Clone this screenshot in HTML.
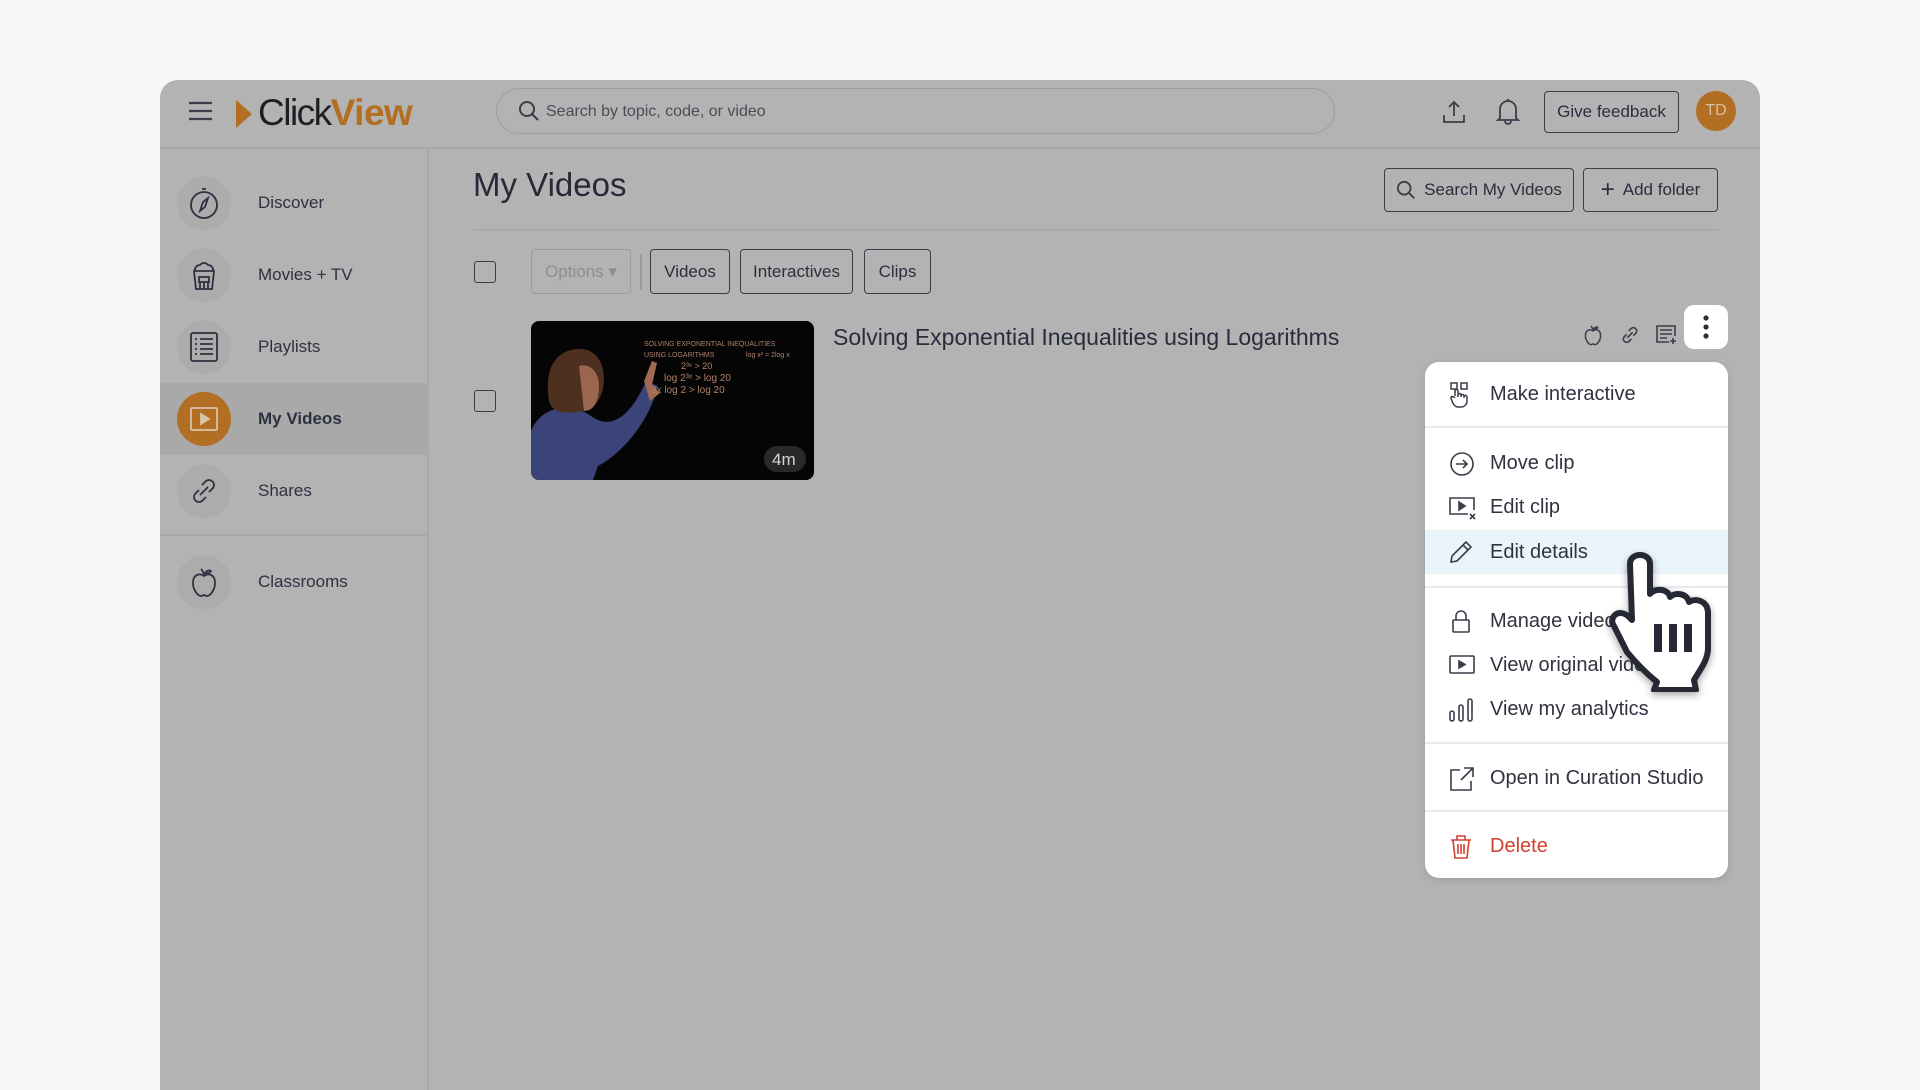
<!DOCTYPE html>
<html><head><meta charset="utf-8"><style>
*{box-sizing:border-box;margin:0;padding:0}
body{width:1920px;height:1080px;background:#f7f7f7;font-family:"Liberation Sans",sans-serif;position:relative;overflow:hidden;color:#2b2e3c}
.win{position:absolute;left:160px;top:80px;width:1600px;height:1010px;background:#b3b3b3;border-radius:18px 18px 0 0;overflow:hidden}
.abs{position:absolute}
.hdr{left:0;top:0;width:1600px;height:69px;border-bottom:2px solid #a9a9a9}
.side{left:0;top:69px;width:269px;height:950px;border-right:2px solid #a9a9a9}
.nav{position:absolute;left:0;width:269px;height:72px}
.nav .ic{position:absolute;left:17px;top:9px;width:54px;height:54px;border-radius:50%;background:#acacac;display:flex;align-items:center;justify-content:center}
.nav .tx{position:absolute;left:98px;top:26px;font-size:17px;color:#2e3140}
.btn{position:absolute;border:1.5px solid #3a3d4a;border-radius:4px;font-size:17px;display:flex;align-items:center;justify-content:center;color:#2b2e3c}
.menu{position:absolute;left:1425px;top:362px;width:303px;height:516px;background:#fff;border-radius:14px;box-shadow:0 2px 8px rgba(0,0,0,.12)}
.mi{position:absolute;left:0;width:303px;height:44px}
.mi .t{position:absolute;left:65px;top:11px;font-size:20px;color:#30333f}
.mi svg{position:absolute;left:24px;top:10px}
.sep{position:absolute;left:0;width:303px;height:2px;background:#e9e9ec}
</style></head><body>
<div class="win">
 <div class="abs hdr">
  <svg class="abs" style="left:28px;top:21px" width="25" height="20" viewBox="0 0 25 20"><path d="M1 2h23M1 10h23M1 18h23" stroke="#3a3d4a" stroke-width="2.2"/></svg>
  <svg class="abs" style="left:75px;top:19px" width="18" height="30"><path d="M1 1L17 15L1 29Z" fill="#b26e22"/></svg>
  <div class="abs" style="left:98px;top:12px;font-size:37px;letter-spacing:-1.5px;color:#1e1e24">Click<span style="color:#b26e22;font-weight:bold;letter-spacing:-0.5px">View</span></div>
  <div class="abs" style="left:336px;top:8px;width:839px;height:46px;border:1.5px solid #9e9e9e;border-radius:23px"></div>
  <svg class="abs" style="left:358px;top:20px" width="22" height="22" viewBox="0 0 22 22"><circle cx="9" cy="9" r="7" fill="none" stroke="#3a3d4a" stroke-width="2"/><path d="M14 14l6 6" stroke="#3a3d4a" stroke-width="2"/></svg>
  <div class="abs" style="left:386px;top:23px;font-size:16px;color:#4a4c57">Search by topic, code, or video</div>
  <svg class="abs" style="left:1281px;top:19px" width="26" height="26" viewBox="0 0 26 26" fill="none" stroke="#3a3d4a" stroke-width="1.8"><path d="M13 17V3M8 8l5-5 5 5M3 16v7h20v-7"/></svg>
  <svg class="abs" style="left:1335px;top:17px" width="26" height="28" viewBox="0 0 26 28" fill="none" stroke="#3a3d4a" stroke-width="1.8"><path d="M5 21V12a8 8 0 0116 0v9l2 2H3zM10 24a3 3 0 006 0M13 2v2"/></svg>
  <div class="btn" style="left:1384px;top:11px;width:135px;height:42px">Give feedback</div>
  <div class="abs" style="left:1536px;top:11px;width:40px;height:40px;border-radius:50%;background:#b26e22;color:#d8c0a6;font-size:16px;display:flex;align-items:center;justify-content:center">TD</div>
 </div>
 <div class="abs side">
  <div class="nav" style="top:18px"><div class="ic"><svg width="32" height="34" viewBox="0 0 32 34" fill="none" stroke="#2e3140" stroke-width="1.8"><circle cx="16" cy="19" r="13"/><path d="M14 3h4M20 12l-3 9-5 4 3-9z"/></svg></div><div class="tx">Discover</div></div>
  <div class="nav" style="top:90px"><div class="ic"><svg width="28" height="32" viewBox="0 0 28 32" fill="none" stroke="#2e3140" stroke-width="1.8"><path d="M4 12h20l-2 18H6zM5 12a5 5 0 015-6 5 5 0 018 0 5 5 0 015 6M9 18h10v5H9zM10 23v7M18 23v7M14 23v7"/></svg></div><div class="tx">Movies + TV</div></div>
  <div class="nav" style="top:162px"><div class="ic"><svg width="28" height="30" viewBox="0 0 28 30" fill="none" stroke="#2e3140" stroke-width="1.8"><rect x="1" y="1" width="26" height="28" rx="2"/><path d="M5 7h2M10 7h13M5 12h2M10 12h13M5 17h2M10 17h13M5 22h2M10 22h13"/></svg></div><div class="tx">Playlists</div></div>
  <div class="abs" style="left:0;top:234px;width:269px;height:72px;background:#a9a9a9"></div>
  <div class="nav" style="top:234px"><div class="ic" style="background:#b26e22"><svg width="28" height="24" viewBox="0 0 28 24" fill="none" stroke="#d9c3a8" stroke-width="1.8"><rect x="1" y="1" width="26" height="22" rx="1"/><path d="M11 7v10l8-5z" fill="#d9c3a8"/></svg></div><div class="tx" style="font-weight:bold">My Videos</div></div>
  <div class="nav" style="top:306px"><div class="ic"><svg width="30" height="30" viewBox="0 0 30 30" fill="none" stroke="#2e3140" stroke-width="1.8"><path d="M13 9l4-4a5 5 0 017 7l-4 4M17 21l-4 4a5 5 0 01-7-7l4-4M11 19l8-8"/></svg></div><div class="tx">Shares</div></div>
  <div class="abs" style="left:0;top:385px;width:269px;height:2px;background:#a9a9a9"></div>
  <div class="nav" style="top:397px"><div class="ic"><svg width="28" height="32" viewBox="0 0 28 32" fill="none" stroke="#2e3140" stroke-width="1.8"><path d="M14 10c-4-3-11-2-11 7 0 7 5 13 8 13 2 0 2-1 3-1s1 1 3 1c3 0 8-6 8-13 0-9-7-10-11-7zM14 10c0-3-1-5-3-7M15 7c2-3 5-3 6-2-1 2-4 3-6 2z"/></svg></div><div class="tx">Classrooms</div></div>
 </div>
 <div class="abs" style="left:313px;top:86px;font-size:33px;color:#262938">My Videos</div>
 <div class="btn" style="left:1224px;top:88px;width:190px;height:44px"><svg width="20" height="20" viewBox="0 0 22 22" style="margin-right:8px"><circle cx="9" cy="9" r="7" fill="none" stroke="#3a3d4a" stroke-width="2"/><path d="M14 14l6 6" stroke="#3a3d4a" stroke-width="2"/></svg>Search My Videos</div>
 <div class="btn" style="left:1423px;top:88px;width:135px;height:44px"><span style="font-size:24px;margin-right:8px;line-height:1">+</span>Add folder</div>
 <div class="abs" style="left:313px;top:149px;width:1245px;height:2px;background:#a9a9a9"></div>
 <div class="abs" style="left:314px;top:181px;width:22px;height:22px;border:1.5px solid #3a3d4a;border-radius:3px"></div>
 <div class="btn" style="left:371px;top:169px;width:100px;height:45px;border-color:#9c9c9c;color:#8d8d8d">Options ▾</div>
 <div class="abs" style="left:480px;top:174px;width:2px;height:36px;background:#9c9c9c"></div>
 <div class="btn" style="left:490px;top:169px;width:80px;height:45px">Videos</div>
 <div class="btn" style="left:580px;top:169px;width:113px;height:45px">Interactives</div>
 <div class="btn" style="left:704px;top:169px;width:67px;height:45px">Clips</div>
 <div class="abs" style="left:314px;top:310px;width:22px;height:22px;border:1.5px solid #3a3d4a;border-radius:3px"></div>
 <svg class="abs" style="left:371px;top:241px;border-radius:8px" width="283" height="159" viewBox="0 0 283 159">
  <rect width="283" height="159" fill="#050505"/>
  <path d="M0 159V110c10-25 40-30 60-15 20 15 40 0 55-35l12 5c-10 40-40 70-60 80l-5 14z" fill="#3a4478"/>
  <path d="M18 80c-5-30 5-50 28-52 22-2 30 20 26 40-3 12-10 20-20 22-12 2-30 5-34-10z" fill="#4e3020"/>
  <path d="M48 45c10-3 20 5 20 20s-5 25-15 25z" fill="#9a6650"/>
  <path d="M113 60l8-20 5 2-5 22 8 8-10 8z" fill="#a06a50"/>
  <g fill="#b0826a" font-size="7" font-family="Liberation Sans">
   <text x="113" y="25">SOLVING EXPONENTIAL INEQUALITIES</text>
   <text x="113" y="36">USING LOGARITHMS</text>
   <text x="215" y="36">log x² = 2log x</text>
   <text x="150" y="48" font-size="9">2³ˣ &gt; 20</text>
   <text x="133" y="60" font-size="10">log 2³ˣ &gt; log 20</text>
   <text x="120" y="72" font-size="10">3x log 2 &gt; log 20</text>
  </g>
  <rect x="233" y="125" width="42" height="26" rx="13" fill="#2a2828"/>
  <text x="241" y="144" font-size="17" fill="#d4d4d4" font-family="Liberation Sans">4m</text>
 </svg>
 <div class="abs" style="left:673px;top:244px;font-size:23px;color:#292c3b">Solving Exponential Inequalities using Logarithms</div>
 <svg class="abs" style="left:1423px;top:244px" width="20" height="22" viewBox="0 0 28 32" fill="none" stroke="#3a3d4a" stroke-width="2.2"><path d="M14 10c-4-3-11-2-11 7 0 7 5 13 8 13 2 0 2-1 3-1s1 1 3 1c3 0 8-6 8-13 0-9-7-10-11-7zM14 10c0-3-1-5-3-7M15 7c2-3 5-3 6-2-1 2-4 3-6 2z"/></svg>
 <svg class="abs" style="left:1460px;top:245px" width="20" height="20" viewBox="0 0 30 30" fill="none" stroke="#3a3d4a" stroke-width="2.4"><path d="M13 9l4-4a5 5 0 017 7l-4 4M17 21l-4 4a5 5 0 01-7-7l4-4M11 19l8-8"/></svg>
 <svg class="abs" style="left:1496px;top:245px" width="22" height="20" viewBox="0 0 22 20" fill="none" stroke="#3a3d4a" stroke-width="1.6"><path d="M13 17H1V1h18v10M4 5h12M4 9h12M4 13h7M17 13v6M14 16h6"/></svg>
</div>
<div class="abs" style="left:1684px;top:305px;width:44px;height:44px;background:#fff;border-radius:10px"><svg width="44" height="44"><circle cx="22" cy="13" r="2.6" fill="#2b2e3c"/><circle cx="22" cy="22" r="2.6" fill="#2b2e3c"/><circle cx="22" cy="31" r="2.6" fill="#2b2e3c"/></svg></div>
<div class="menu">
 <div class="mi" style="top:10px"><svg width="24" height="26" viewBox="0 0 24 26" fill="none" stroke="#3a3d4a" stroke-width="1.5"><rect x="2" y="1" width="6" height="6"/><rect x="12" y="1" width="6" height="6"/><path d="M6 14V9a1.5 1.5 0 013 0v6M9 13a1.5 1.5 0 013 0v2M12 14a1.5 1.5 0 013 0v2M15 15a1.5 1.5 0 013 0v4c0 4-3 6-6 6H9c-3 0-5-3-6-6l-1-3c0-2 2-2 4 0"/></svg><div class="t">Make interactive</div></div>
 <div class="sep" style="top:64px"></div>
 <div class="mi" style="top:79px"><svg width="26" height="26" viewBox="0 0 26 26" fill="none" stroke="#3a3d4a" stroke-width="1.6"><circle cx="13" cy="13" r="11"/><path d="M7 13h11M14 9l4 4-4 4"/></svg><div class="t">Move clip</div></div>
 <div class="mi" style="top:123px"><svg width="28" height="26" viewBox="0 0 28 26" fill="none" stroke="#3a3d4a" stroke-width="1.6"><path d="M19 19H1V3h24v12"/><path d="M10 7v8l6-4z" fill="#3a3d4a"/><path d="M21 19l5 5M26 19l-5 5"/></svg><div class="t">Edit clip</div></div>
 <div class="abs" style="left:0;top:168px;width:303px;height:44px;background:#eaf4fb"></div>
 <div class="mi" style="top:168px"><svg width="24" height="24" viewBox="0 0 24 24" fill="none" stroke="#3a3d4a" stroke-width="1.6"><path d="M2 22l1-6L17 2l5 5L8 21zM14 5l5 5"/></svg><div class="t">Edit details</div></div>
 <div class="sep" style="top:224px"></div>
 <div class="mi" style="top:237px"><svg width="24" height="26" viewBox="0 0 24 26" fill="none" stroke="#3a3d4a" stroke-width="1.6"><rect x="4" y="11" width="16" height="12" rx="1"/><path d="M7 11V7a5 5 0 0110 0v4"/></svg><div class="t">Manage video</div></div>
 <div class="mi" style="top:281px"><svg width="26" height="24" viewBox="0 0 26 24" fill="none" stroke="#3a3d4a" stroke-width="1.6"><rect x="1" y="3" width="24" height="17" rx="1"/><path d="M10 8v7l6-3.5z" fill="#3a3d4a"/></svg><div class="t">View original video</div></div>
 <div class="mi" style="top:325px"><svg width="26" height="26" viewBox="0 0 26 26" fill="none" stroke="#3a3d4a" stroke-width="1.6"><rect x="1" y="14" width="4" height="10" rx="2"/><rect x="10" y="8" width="4" height="16" rx="2"/><rect x="19" y="2" width="4" height="22" rx="2"/></svg><div class="t">View my analytics</div></div>
 <div class="sep" style="top:380px"></div>
 <div class="mi" style="top:394px"><svg width="26" height="26" viewBox="0 0 26 26" fill="none" stroke="#3a3d4a" stroke-width="1.6"><path d="M11 4H2v20h20v-9M15 2h9v9M24 2L12 14"/></svg><div class="t">Open in Curation Studio</div></div>
 <div class="sep" style="top:448px"></div>
 <div class="mi" style="top:462px"><svg width="24" height="26" viewBox="0 0 24 26" fill="none" stroke="#d0402f" stroke-width="1.6"><path d="M2 6h20M8 6V2h8v4M4 6l2 18h12l2-18M9 10v10M12 10v10M15 10v10"/></svg><div class="t" style="color:#d0402f">Delete</div></div>
</div>
<svg class="abs" style="left:1608px;top:552px;filter:drop-shadow(0 3px 4px rgba(0,0,0,.35))" width="110" height="140" viewBox="0 0 110 140">
 <path d="M22 12c0-12 20-12 20 0v30c4-6 18-6 20 3 5-5 17-4 19 5 6-4 18-2 19 10v36c0 12-8 22-14 32l2 10H46l3-8c-10-8-20-18-30-30L6 74c-6-8 4-18 14-10l4 4z" fill="#fff" stroke="#262833" stroke-width="6" stroke-linejoin="round"/>
 <path d="M50 72v28M65 72v28M80 72v28" stroke="#262833" stroke-width="8"/>
</svg>
</body></html>
